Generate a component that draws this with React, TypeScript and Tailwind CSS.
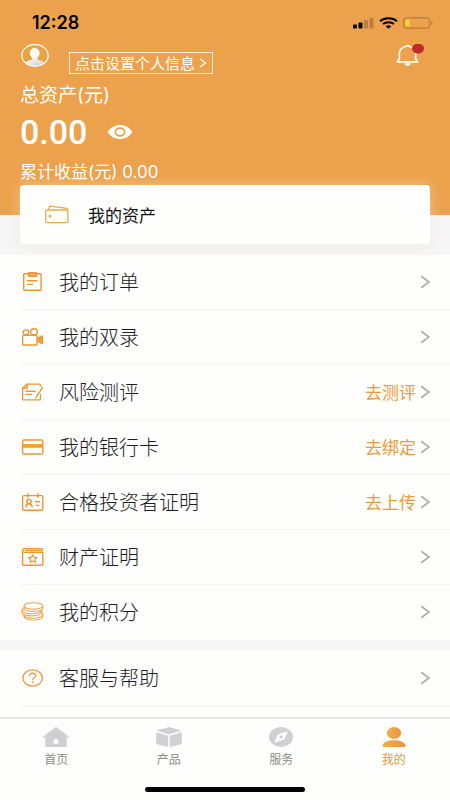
import type { ReactNode } from 'react'

interface MenuItem {
  id: string
  label: string
  icon: ReactNode
  action?: string
}

function LineIcon({ children }: { children: ReactNode }) {
  return (
    <svg
      width="24"
      height="20"
      viewBox="0 0 24 20"
      fill="none"
      stroke="#ec9735"
      strokeWidth="1.4"
      strokeLinecap="round"
      strokeLinejoin="round"
      className="shrink-0"
      aria-hidden="true"
    >
      {children}
    </svg>
  )
}

function Chevron() {
  return (
    <svg width="10" height="14" viewBox="0 0 10 14" fill="none" stroke="#adadad" strokeWidth="1.7" className="shrink-0" aria-hidden="true">
      <path d="M1.2 1.2 9 7 1.2 12.8" />
    </svg>
  )
}

const mainItems: MenuItem[] = [
  {
    id: 'orders',
    label: '我的订单',
    icon: (
      <LineIcon>
        <rect x="3.7" y="1.8" width="17.4" height="16.4" rx="1" />
        <rect x="8.5" y="0.8" width="8" height="3.4" rx="0.6" fill="#efb066" />
        <path d="M7.3 8.8H17M7.3 12.4h5.2" />
      </LineIcon>
    ),
  },
  {
    id: 'recordings',
    label: '我的双录',
    icon: (
      <LineIcon>
        <ellipse cx="6" cy="5.4" rx="2.8" ry="2.5" />
        <ellipse cx="14" cy="4.8" rx="3.4" ry="3" />
        <rect x="2.6" y="8.4" width="14.4" height="9.6" rx="1" />
        <path d="M18.2 11 22.4 9v7.6l-4.2-2z" fill="#e6a73a" />
      </LineIcon>
    ),
  },
  {
    id: 'risk',
    label: '风险测评',
    action: '去测评',
    icon: (
      <LineIcon>
        <path d="M20.4 4V3a.9.9 0 0 0-.9-.9H7.2L2.6 6v11a.9.9 0 0 0 .9.9h16a.9.9 0 0 0 .9-.9v-4.6" />
        <path d="M7.2 2.1V6H2.6M6 9.2h9.2M6 12.4h5.6M22.6 5.4l-5.8 8.8-1 1.6" />
      </LineIcon>
    ),
  },
  {
    id: 'cards',
    label: '我的银行卡',
    action: '去绑定',
    icon: (
      <LineIcon>
        <rect x="2.6" y="7" width="20.2" height="3.8" fill="#e6a73a" stroke="none" />
        <rect x="2.6" y="3" width="20.2" height="14" rx="1.6" />
      </LineIcon>
    ),
  },
  {
    id: 'investor',
    label: '合格投资者证明',
    action: '去上传',
    icon: (
      <LineIcon>
        <rect x="2.6" y="3.6" width="20.2" height="14.6" rx="1.2" />
        <path d="M8 1.6v4M18 1.6v4" />
        <ellipse cx="9" cy="9.4" rx="2.2" ry="2" />
        <path d="M5.8 15c.3-2.2 1.5-3.2 3.2-3.2s2.9 1 3.2 3.2M15.4 9.8h4.2M16.2 13.4h2.6" />
      </LineIcon>
    ),
  },
  {
    id: 'property',
    label: '财产证明',
    icon: (
      <LineIcon>
        <path d="M22.8 1.7H4.4c-2.4 0-2.4 3.6 0 3.6h18.4v11.9a1 1 0 0 1-1 1H3.6a1 1 0 0 1-1-1V3.5" />
        <path d="M5.4 3.5h17.2" strokeWidth="1" />
        <path d="m12.8 7.8 1.3 2.4 3 .4-2.2 1.9.6 2.8-2.7-1.3-2.7 1.3.6-2.8-2.2-1.9 3-.4z" strokeWidth="1.2" />
      </LineIcon>
    ),
  },
  {
    id: 'points',
    label: '我的积分',
    icon: (
      <LineIcon>
        <g strokeWidth="1.1" stroke="#efa45a">
          <ellipse cx="13.4" cy="3.9" rx="9.4" ry="3.2" />
          <path d="M4 4.2v2c.5 4.2 18.3 4.2 18.8 0v-2" />
          <path d="M4 6.6c-1.4.5-2 1.2-2 2 0 4 18.6 4.8 19.6-1" />
          <path d="M2 8.8v1.8c0 4 18.8 4.8 19.6-.4V7.8" />
          <path d="M4 13c-.4 4.2 18.6 4.4 18.8-.4 0-.8-.4-1.4-1-1.9" />
          <path d="M4 13.4v1.4c.2 4.3 18.6 4.3 18.8-.4v-1.6" />
        </g>
      </LineIcon>
    ),
  },
]

const helpItems: MenuItem[] = [
  {
    id: 'help',
    label: '客服与帮助',
    icon: (
      <LineIcon>
        <ellipse cx="12.6" cy="10" rx="9.7" ry="8.2" strokeWidth="1.3" />
        <path d="M9.5 8c0-1.8 1.4-2.8 3.2-2.8s3.1 1 3.1 2.5c0 2-3.1 1.9-3.1 4.1" strokeWidth="1.2" />
        <circle cx="12.7" cy="14.2" r=".3" />
      </LineIcon>
    ),
  },
]

const tabs = [
  {
    id: 'home',
    label: '首页',
    active: false,
    icon: (
      <>
        <path
          d="M13.2.4a1.3 1.3 0 0 1 1.6 0l12 9c.6.5.3 1.4-.5 1.4h-1.6v7.6c0 1-.7 1.6-1.7 1.6H5c-1 0-1.7-.6-1.7-1.6v-7.6H1.7c-.8 0-1.1-.9-.5-1.4z"
          fill="#cfcfd4"
        />
        <ellipse cx="14" cy="14.6" rx="2.7" ry="2.5" fill="#fff" />
      </>
    ),
  },
  {
    id: 'products',
    label: '产品',
    active: false,
    icon: (
      <g fill="#cfcfd4" stroke="#cfcfd4" strokeWidth=".8" strokeLinejoin="round">
        <path d="M14 .6 25.6 3.5 14 7 2.4 3.5z" />
        <path d="M1.6 5.8 12.8 9v10.6L2.6 17a1.2 1.2 0 0 1-1-1.2z" />
        <path d="M26.4 5.8 15.2 9v10.6L25.4 17a1.2 1.2 0 0 0 1-1.2z" />
      </g>
    ),
  },
  {
    id: 'service',
    label: '服务',
    active: false,
    icon: (
      <>
        <ellipse cx="14" cy="10" rx="12" ry="10" fill="#cfcfd4" />
        <path d="M20.2 5 17 12.2 8 15.2l3-7.4z" fill="#fff" stroke="#fff" strokeLinejoin="round" />
        <ellipse cx="14.1" cy="10" rx="1.7" ry="1.4" fill="#cfcfd4" />
      </>
    ),
  },
  {
    id: 'mine',
    label: '我的',
    active: true,
    icon: (
      <>
        <defs>
          <linearGradient id="mine-fill" x1="0" x2="1">
            <stop offset="0" stopColor="#ecb152" />
            <stop offset="1" stopColor="#e9933a" />
          </linearGradient>
        </defs>
        <ellipse cx="14" cy="6" rx="7.2" ry="6" fill="url(#mine-fill)" />
        <path d="M2.4 18.6C3.4 15 8 13.2 14 13.2S24.6 15 25.6 18.6c.2.9-.3 1.4-1.2 1.4H3.6c-.9 0-1.4-.5-1.2-1.4z" fill="url(#mine-fill)" />
      </>
    ),
  },
]

function MenuList({ items }: { items: MenuItem[] }) {
  return (
    <ul className="bg-[#fefefd]">
      {items.map((item) => (
        <li key={item.id} className="ml-5 border-b border-[#f3f3f5] last:border-transparent">
          <a href={`#${item.id}`} className="flex h-[54px] items-center pr-5">
            {item.icon}
            <span className="ml-[15px] flex-1 text-[20px] font-light leading-6 text-[#1c1c1c]">{item.label}</span>
            {item.action && <span className="mr-1 text-[17px] leading-6 text-[#ea9a40]">{item.action}</span>}
            <Chevron />
          </a>
        </li>
      ))}
    </ul>
  )
}

function StatusBar() {
  return (
    <div className="flex h-11 items-center justify-between pl-3 pt-0.5 text-black">
      <span className="font-[Inter] text-[18px] font-semibold leading-6">12:28</span>
      <svg width="82" height="12" viewBox="0 0 82 12" className="-mr-1" aria-hidden="true">
        <rect x="1" y="7.5" width="4" height="4" rx="1" />
        <rect x="6.5" y="5.5" width="4" height="6" rx="1" />
        <rect x="12" y="3" width="4" height="8.5" rx="1" fill="#b97f3d" />
        <rect x="17.5" y=".8" width="4" height="10.7" rx="1" fill="#b97f3d" />
        <g fill="none" stroke="#000" strokeWidth="2">
          <path d="M28 4.2c4.6-4 12.4-4 17 0" />
          <path d="M31 7.1c3-2.5 8-2.5 11 0" />
        </g>
        <path d="M33.6 9.2c1.6-1.2 4.2-1.2 5.8 0L36.500 11.8z" />
        <rect x="51.7" y=".9" width="26" height="10.2" rx="2.8" fill="none" stroke="#a87235" />
        <rect x="53.5" y="2.5" width="4" height="7" rx="1.2" fill="#f9d33c" />
        <path d="M79.3 4.2c1.6.5 1.6 3.1 0 3.6z" fill="#a87235" />
      </svg>
    </div>
  )
}

export default function App() {
  return (
    <div className="flex min-h-screen flex-col bg-[#fefefd] font-['Noto_Sans_CJK_SC',sans-serif]">
      <header className="bg-[#eca24c] px-5 pb-[31px] text-white">
        <StatusBar />

        <div className="flex items-start">
          <svg width="30" height="24" viewBox="0 0 30 24" aria-hidden="true">
            <defs>
              <clipPath id="avatar-clip">
                <ellipse cx="15" cy="11.5" rx="13" ry="10.7" />
              </clipPath>
              <linearGradient id="avatar-body" x1="0" x2="1" y1="0" y2="1">
                <stop offset="0" stopColor="#fff" />
                <stop offset="1" stopColor="#c9c9c9" />
              </linearGradient>
            </defs>
            <ellipse cx="15" cy="11.5" rx="13" ry="10.7" fill="#e5a545" />
            <g clipPath="url(#avatar-clip)" fill="url(#avatar-body)">
              <path d="M4 23c0-5 3.5-6.3 7.7-7.3l1-2h4.4l1 2c4.2 1 8 2.3 8 7.3z" />
              <ellipse cx="14.7" cy="9.2" rx="4.9" ry="5.4" fill="#fff" />
            </g>
            <ellipse cx="15" cy="11.5" rx="13.2" ry="10.8" fill="none" stroke="#fff" strokeWidth="1.2" />
          </svg>
          <button type="button" className="ml-[19px] mt-2 flex h-[22px] items-center border border-white/80 px-[5px] text-[15px] leading-5">
            点击设置个人信息
            <svg width="8" height="10" viewBox="0 0 8 10" fill="none" stroke="#fff" strokeWidth="1.3" className="ml-1" aria-hidden="true">
              <path d="M1 1l5.5 4L1 9" />
            </svg>
          </button>
          <button type="button" aria-label="消息" className="ml-auto mr-1.5">
            <svg width="30" height="24" viewBox="0 0 30 24" fill="none" aria-hidden="true">
              <path
                d="M12 2.2c.9-.9 2.1-.9 3 0 4.4 1.2 6.6 3.6 6.6 7v6l2.1 2.7H3.2L5.4 15V9.2c0-3.4 2.2-5.8 6.6-7z"
                stroke="#fff"
                strokeWidth="1.6"
                strokeLinejoin="round"
              />
              <path d="M10.6 19.2h6c0 3.4-6 3.4-6 0z" fill="#fff" />
              <ellipse cx="24" cy="4.6" rx="6" ry="5" fill="#bf2a2a" />
            </svg>
          </button>
        </div>

        <p className="mt-[10px] font-[Inter,'Noto_Sans_CJK_SC',sans-serif] text-[19px] leading-6">总资产(元)</p>
        <div className="mt-1 flex items-center">
          <span className="font-[Roboto] text-[34px] font-medium leading-10">0.00</span>
          <button type="button" aria-label="隐藏金额" className="ml-5">
            <svg width="26" height="16" viewBox="0 0 26 16" aria-hidden="true">
              <path d="M.6 8C4 3 8.3 1 13 1s9 2 12.4 7C22 13 17.7 15 13 15S4 13 .6 8z" fill="#fff" />
              <ellipse cx="13" cy="8" rx="4.6" ry="3.9" fill="#fff" stroke="#eca24c" strokeWidth="1.7" />
            </svg>
          </button>
        </div>
        <p className="mt-2 font-[Inter,'Noto_Sans_CJK_SC',sans-serif] text-[17px] leading-6">累计收益(元) 0.00</p>
      </header>

      <main className="flex-1">
        <section className="flex bg-[#f6f6f6] px-5 pb-[11px]">
          <a
            href="#assets"
            className="-mt-[30px] flex h-[59px] flex-1 items-center rounded-[4px] bg-[#fefefd] px-6 shadow-[0_0_12px_rgba(255,240,220,0.5),0_2px_8px_rgba(0,0,0,0.04)]"
          >
            <svg width="26" height="20" viewBox="0 0 26 20" fill="none" stroke="#ecaa4c" strokeWidth="1.3" strokeLinejoin="round" aria-hidden="true">
              <rect x="1.7" y="5" width="22.2" height="12.6" rx="1.6" />
              <path d="M4.6 4.8 5.8 1.2l17 2.2c.7.1 1 .5 1 1.8" />
              <circle cx="6" cy="11.2" r=".8" fill="#e9912e" />
            </svg>
            <span className="ml-[18px] text-[17px] leading-6 text-[#111]">我的资产</span>
          </a>
        </section>

        <MenuList items={mainItems} />
        <div className="h-[11px] bg-[#f6f6f6]" />
        <MenuList items={helpItems} />
        <div className="ml-5 border-t border-[#f3f3f5]" />
      </main>

      <footer className="border-t-2 border-[#e6e6e6] bg-[#fefefd]">
        <nav className="grid grid-cols-4 pt-2">
          {tabs.map((tab) => (
            <a key={tab.id} href={`#${tab.id}`} className="flex flex-col items-center gap-1">
              <svg width="28" height="20" viewBox="0 0 28 20" aria-hidden="true">
                {tab.icon}
              </svg>
              <span className={tab.active ? 'text-[12px] leading-4 text-[#e99536]' : 'text-[12px] leading-4 text-[#8c8c8c]'}>{tab.label}</span>
            </a>
          ))}
        </nav>
        <div className="mx-auto mb-2 mt-5 h-[5px] w-40 rounded-full bg-black" />
      </footer>
    </div>
  )
}
